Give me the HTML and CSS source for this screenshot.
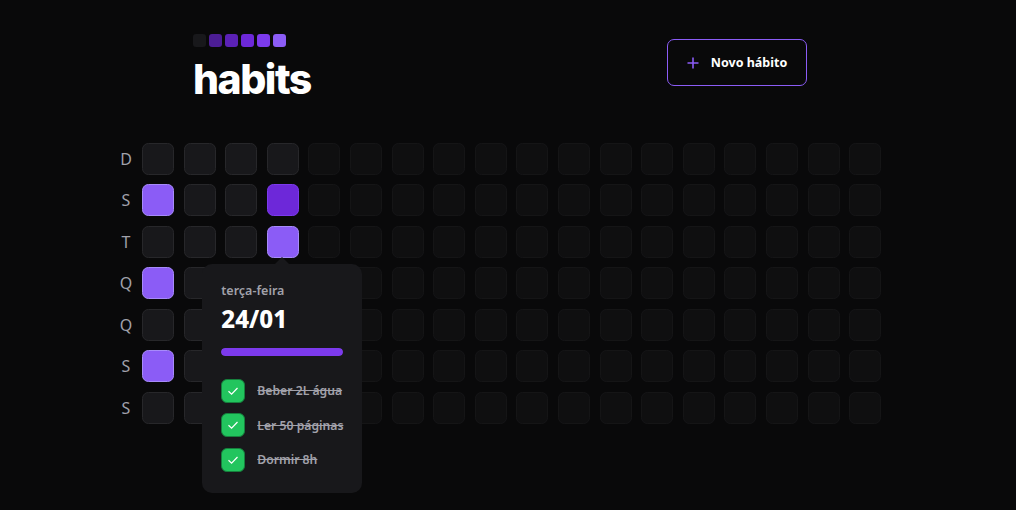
FILE: index.html
```html
<!DOCTYPE html>
<html lang="pt-BR">
<head>
<meta charset="utf-8">
<title>habits</title>
<link rel="stylesheet" href="styles.css">
</head>
<body>
<div class="page">
  <header class="header">
    <div class="brand">
      <div class="logo">
        <span class="sq s0"></span><span class="sq s1"></span><span class="sq s2"></span><span class="sq s3"></span><span class="sq s4"></span><span class="sq s5"></span>
      </div>
      <h1 class="title">habits</h1>
    </div>
    <button class="new-btn" type="button">
      <svg class="plus" width="12" height="12" viewBox="0 0 12 12" fill="none"><path d="M6 0.5V11.5M0.5 6H11.5" stroke="#8b5cf6" stroke-width="1.6"/></svg>
      <span>Novo hábito</span>
    </button>
  </header>

  <section class="summary">
    <div class="weekdays">
      <div class="wd">D</div><div class="wd">S</div><div class="wd">T</div><div class="wd">Q</div><div class="wd">Q</div><div class="wd">S</div><div class="wd">S</div>
    </div>
    <div class="days">
      <div class="cell"></div><div class="cell lvl4"></div><div class="cell"></div><div class="cell lvl4"></div><div class="cell"></div><div class="cell lvl4"></div><div class="cell"></div>
      <div class="cell"></div><div class="cell"></div><div class="cell"></div><div class="cell"></div><div class="cell"></div><div class="cell"></div><div class="cell"></div>
      <div class="cell"></div><div class="cell"></div><div class="cell"></div><div class="cell"></div><div class="cell"></div><div class="cell"></div><div class="cell"></div>
      <div class="cell"></div><div class="cell lvl3"></div>
      <div class="cell lvl4 anchor">
        <div class="popover">
          <span class="arrow"></span>
          <div class="weekday">terça-feira</div>
          <div class="date">24/01</div>
          <div class="progress"><div class="progress-bar" style="width:100%"></div></div>
          <ul class="checks">
            <li class="check"><span class="box"><svg width="14" height="14" viewBox="0 0 14 14" fill="none"><path d="M2.5 7.2L5.6 10.2L11.5 4" stroke="#fff" stroke-width="1.2"/></svg></span><span class="label">Beber 2L água</span></li>
            <li class="check"><span class="box"><svg width="14" height="14" viewBox="0 0 14 14" fill="none"><path d="M2.5 7.2L5.6 10.2L11.5 4" stroke="#fff" stroke-width="1.2"/></svg></span><span class="label">Ler 50 páginas</span></li>
            <li class="check"><span class="box"><svg width="14" height="14" viewBox="0 0 14 14" fill="none"><path d="M2.5 7.2L5.6 10.2L11.5 4" stroke="#fff" stroke-width="1.2"/></svg></span><span class="label">Dormir 8h</span></li>
          </ul>
        </div>
      </div>
      <div class="cell future"></div><div class="cell future"></div><div class="cell future"></div><div class="cell future"></div>
      <div class="cell future"></div><div class="cell future"></div><div class="cell future"></div><div class="cell future"></div><div class="cell future"></div><div class="cell future"></div><div class="cell future"></div>
      <div class="cell future"></div><div class="cell future"></div><div class="cell future"></div><div class="cell future"></div><div class="cell future"></div><div class="cell future"></div><div class="cell future"></div>
      <div class="cell future"></div><div class="cell future"></div><div class="cell future"></div><div class="cell future"></div><div class="cell future"></div><div class="cell future"></div><div class="cell future"></div>
      <div class="cell future"></div><div class="cell future"></div><div class="cell future"></div><div class="cell future"></div><div class="cell future"></div><div class="cell future"></div><div class="cell future"></div>
      <div class="cell future"></div><div class="cell future"></div><div class="cell future"></div><div class="cell future"></div><div class="cell future"></div><div class="cell future"></div><div class="cell future"></div>
      <div class="cell future"></div><div class="cell future"></div><div class="cell future"></div><div class="cell future"></div><div class="cell future"></div><div class="cell future"></div><div class="cell future"></div>
      <div class="cell future"></div><div class="cell future"></div><div class="cell future"></div><div class="cell future"></div><div class="cell future"></div><div class="cell future"></div><div class="cell future"></div>
      <div class="cell future"></div><div class="cell future"></div><div class="cell future"></div><div class="cell future"></div><div class="cell future"></div><div class="cell future"></div><div class="cell future"></div>
      <div class="cell future"></div><div class="cell future"></div><div class="cell future"></div><div class="cell future"></div><div class="cell future"></div><div class="cell future"></div><div class="cell future"></div>
      <div class="cell future"></div><div class="cell future"></div><div class="cell future"></div><div class="cell future"></div><div class="cell future"></div><div class="cell future"></div><div class="cell future"></div>
      <div class="cell future"></div><div class="cell future"></div><div class="cell future"></div><div class="cell future"></div><div class="cell future"></div><div class="cell future"></div><div class="cell future"></div>
      <div class="cell future"></div><div class="cell future"></div><div class="cell future"></div><div class="cell future"></div><div class="cell future"></div><div class="cell future"></div><div class="cell future"></div>
      <div class="cell future"></div><div class="cell future"></div><div class="cell future"></div><div class="cell future"></div><div class="cell future"></div><div class="cell future"></div><div class="cell future"></div>
      <div class="cell future"></div><div class="cell future"></div><div class="cell future"></div><div class="cell future"></div><div class="cell future"></div><div class="cell future"></div><div class="cell future"></div>
    </div>
  </section>
</div>
</body>
</html>
```

FILE: styles.css
```css
* { box-sizing: border-box; }
html, body { margin: 0; padding: 0; }
body {
  background: #09090a;
  color: #fff;
  font-family: "Noto Sans", "Open Sans", sans-serif;
  height: 510px;
  overflow: hidden;
}
.page { padding-top: 34px; }

.header {
  width: 614px;
  margin-left: 193px;
  display: flex;
  justify-content: space-between;
  align-items: flex-start;
}
.logo { display: flex; gap: 3.2px; }
.sq { width: 12.8px; height: 12.5px; border-radius: 3px; display: block; }
.s0 { background: #18181b; }
.s1 { background: #4c1d95; }
.s2 { background: #5b21b6; }
.s3 { background: #6d28d9; }
.s4 { background: #7c3aed; }
.s5 { background: #8b5cf6; }
.title {
  margin: 12px 0 0;
  font-family: Inter, "Liberation Sans", sans-serif;
  font-weight: 800;
  font-size: 41px;
  line-height: 41px;
  letter-spacing: -1.5px;
  color: #fff;
}
.new-btn {
  margin-top: 5px;
  width: 140px;
  height: 47px;
  border: 1px solid #8b5cf6;
  border-radius: 7px;
  background: transparent;
  color: #fff;
  font-family: "Noto Sans", sans-serif;
  font-weight: 700;
  font-size: 12.5px;
  display: flex;
  align-items: center;
  justify-content: center;
  gap: 12px;
  padding: 0;
}
.plus { display: block; }

.summary {
  margin-top: 43px;
  margin-left: 110px;
  display: flex;
}
.weekdays {
  display: grid;
  grid-template-rows: repeat(7, 32px);
  row-gap: 9.6px;
  width: 32px;
}
.wd {
  display: flex;
  align-items: center;
  justify-content: center;
  color: #a1a1aa;
  font-size: 16px;
  font-weight: 400;
}
.days {
  display: grid;
  grid-template-rows: repeat(7, 32px);
  grid-auto-columns: 32px;
  grid-auto-flow: column;
  gap: 9.6px;
}
.cell {
  width: 32px;
  height: 32px;
  border-radius: 6.4px;
  background: #18181b;
  border: 1.6px solid #27272a;
}
.cell.future { opacity: 0.4; }
.cell.lvl3 { background: #6d28d9; border-color: #7c3aed; }
.cell.lvl4 { background: #8b5cf6; border-color: #a78bfa; }
.anchor { position: relative; }

.popover {
  position: absolute;
  z-index: 5;
  top: calc(100% + 7px);
  left: -65.5px;
  width: 160px;
  padding: 19px 19px 21px;
  background: #18181b;
  border-radius: 10px;
}
.arrow {
  position: absolute;
  top: -7px;
  left: 73px;
  width: 0;
  height: 0;
  border-left: 7px solid transparent;
  border-right: 7px solid transparent;
  border-bottom: 7px solid #18181b;
}
.weekday {
  color: #a1a1aa;
  font-weight: 600;
  font-size: 12.5px;
  line-height: 16px;
}
.date {
  margin-top: 5px;
  font-weight: 800;
  font-size: 24px;
  line-height: 30px;
  color: #fff;
}
.progress {
  margin-top: 14px;
  height: 8px;
  border-radius: 8px;
  background: #27272a;
  overflow: hidden;
}
.progress-bar { height: 100%; background: #7c3aed; border-radius: 8px; }
.checks {
  list-style: none;
  margin: 23px 0 0;
  padding: 0;
  display: flex;
  flex-direction: column;
  gap: 10.6px;
}
.check { display: flex; align-items: center; gap: 12px; height: 24px; }
.box {
  flex: none;
  width: 24px;
  height: 24px;
  border-radius: 6px;
  background: #22c55e;
  border: 1.6px solid #16803d;
  display: flex;
  align-items: center;
  justify-content: center;
}
.box svg { display: block; }
.label {
  color: #a1a1aa;
  font-weight: 600;
  font-size: 12.2px;
  white-space: nowrap;
  text-decoration: line-through;
}
```
